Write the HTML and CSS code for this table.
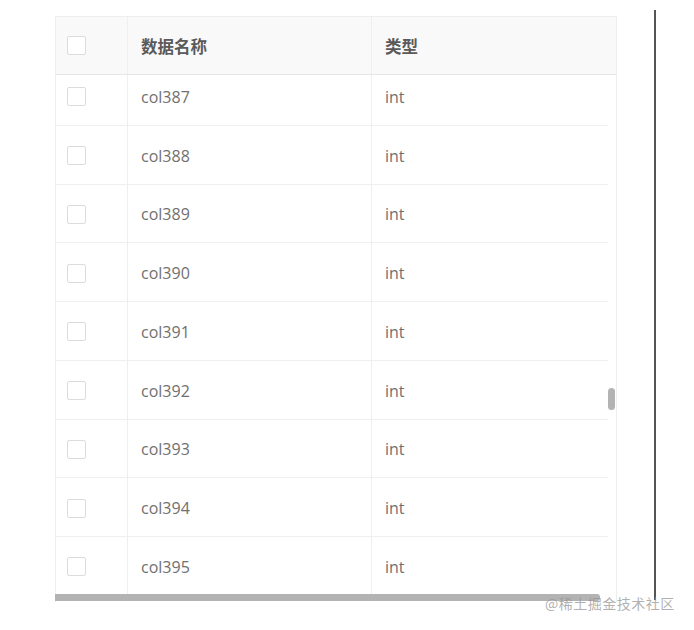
FILE: index.html
```html
<!DOCTYPE html>
<html lang="zh">
<head>
<meta charset="utf-8">
<link rel="stylesheet" href="styles.css">
</head>
<body>
<div class="page">
  <div class="table">
    <div class="head">
      <div class="cell check"><span class="box"></span></div>
      <div class="cell name">数据名称</div>
      <div class="cell type">类型</div>
    </div>
    <div class="body">
      <div class="rows">
        <div class="row"><div class="cell check"><span class="box"></span></div><div class="cell name">col387</div><div class="cell type">int</div></div>
        <div class="row"><div class="cell check"><span class="box"></span></div><div class="cell name">col388</div><div class="cell type">int</div></div>
        <div class="row"><div class="cell check"><span class="box"></span></div><div class="cell name">col389</div><div class="cell type">int</div></div>
        <div class="row"><div class="cell check"><span class="box"></span></div><div class="cell name">col390</div><div class="cell type">int</div></div>
        <div class="row"><div class="cell check"><span class="box"></span></div><div class="cell name">col391</div><div class="cell type">int</div></div>
        <div class="row"><div class="cell check"><span class="box"></span></div><div class="cell name">col392</div><div class="cell type">int</div></div>
        <div class="row"><div class="cell check"><span class="box"></span></div><div class="cell name">col393</div><div class="cell type">int</div></div>
        <div class="row"><div class="cell check"><span class="box"></span></div><div class="cell name">col394</div><div class="cell type">int</div></div>
        <div class="row"><div class="cell check"><span class="box"></span></div><div class="cell name">col395</div><div class="cell type">int</div></div>
      </div>
      <div class="vthumb"></div>
    </div>
    <div class="hbar"><div class="hthumb"></div></div>
  </div>
  <div class="divider"></div>
  <div class="watermark">@稀土掘金技术社区</div>
</div>
</body>
</html>
```

FILE: styles.css
```css
html, body {
  margin: 0;
  padding: 0;
  background: #ffffff;
}

.page {
  position: relative;
  width: 694px;
  height: 630px;
  display: flex;
  align-items: flex-start;
  font-family: "Open Sans", "Noto Sans CJK SC", sans-serif;
}

.table {
  margin-left: 55px;
  margin-top: 16px;
  width: 562px;
  border-top: 1px solid #eeeeee;
  border-left: 1px solid #eeeeee;
  border-right: 1px solid #eeeeee;
  box-sizing: border-box;
}

.head {
  display: grid;
  grid-template-columns: 72px 244px 1fr;
  height: 58px;
  background: #f9f9f9;
  border-bottom: 1px solid #e6e6e6;
  box-sizing: border-box;
}

.head .cell {
  font-family: "Noto Sans CJK SC", sans-serif;
  font-weight: 700;
  font-size: 16.5px;
  color: #5a5a5a;
}

.cell {
  display: flex;
  align-items: center;
  padding-left: 13px;
  border-right: 1px solid #efefef;
  box-sizing: border-box;
  font-size: 16px;
  color: #707070;
}

.cell.type {
  border-right: none;
}

.cell.check {
  padding-left: 11px;
}

.box {
  width: 19px;
  height: 19px;
  border: 1px solid #dcdcdc;
  border-radius: 2px;
  background: #ffffff;
  box-sizing: border-box;
}

.body {
  position: relative;
  height: 519px;
  overflow: hidden;
}

.rows {
  width: 552px;
  margin-top: -8px;
}

.row {
  display: grid;
  grid-template-columns: 72px 244px 1fr;
  height: 58.75px;
  border-bottom: 1px solid #efefef;
  box-sizing: border-box;
}

.row .cell {
  padding-top: 2px;
}

.vthumb {
  position: absolute;
  right: 1px;
  top: 313px;
  width: 7px;
  height: 22px;
  border-radius: 4px;
  background: #b3b3b3;
}

.hbar {
  height: 8px;
  margin-left: -1px;
}

.hthumb {
  width: 545px;
  height: 7px;
  background: #b3b3b3;
  border-radius: 0 3px 3px 0;
}

.divider {
  margin-left: 37px;
  margin-top: 10px;
  width: 2px;
  height: 590px;
  background: #555555;
}

.watermark {
  position: absolute;
  left: 545px;
  top: 593px;
  font-family: "Noto Sans CJK SC", sans-serif;
  font-size: 14px;
  color: rgba(150, 150, 150, 0.75);
  letter-spacing: 0.5px;
}
```
